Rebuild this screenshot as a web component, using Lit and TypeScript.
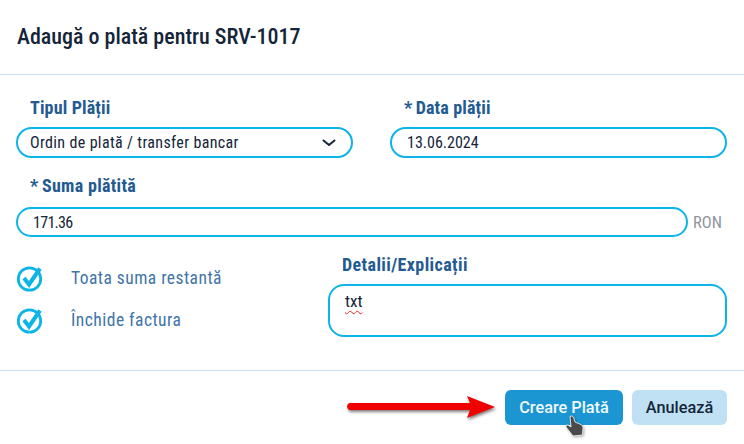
import { LitElement, html, css, svg } from "lit";
import { customElement } from "lit/decorators.js";

const check = svg`<svg class="chk" width="28" height="28" viewBox="0 0 28 28" fill="none">
  <circle cx="13.5" cy="15" r="11.2" stroke="#0db4e6" stroke-width="2.8"/>
  <path d="M8 14 L13 20.5 L24 4.5" stroke="#0db4e6" stroke-width="4" stroke-linecap="butt" stroke-linejoin="miter"/>
</svg>`;

@customElement("app-root")
export class AppRoot extends LitElement {
  static styles = css`
    :host { display: block; width: 744px; height: 444px; background: #fff; overflow: hidden; position: relative;
      font-family: "Roboto", "Liberation Sans", sans-serif; color: #1a2a3a; font-stretch: 80%; }
    * { box-sizing: border-box; }
    .head { height: 75px; border-bottom: 1px solid #c4e4f5; padding: 24px 17px 0; font-size: 22px; font-weight: 500; line-height: 26px; color: #14253a; font-stretch: 75%; }
    .body { height: 296px; border-bottom: 1px solid #c4e4f5; padding: 23px 17px 0 16px; display: flex; flex-direction: column; }
    .row { display: grid; grid-template-columns: 337px 337px; column-gap: 37px; }
    .lab { font-size: 18px; font-weight: 700; color: #235a91; line-height: 20px; padding-left: 14px; margin-bottom: 9px; display: block; font-stretch: 75%; letter-spacing: 0.15px; }
    .lab b { font-weight: 700; margin-right: -1px; }
    .sumlab { margin-bottom: 11px; letter-spacing: 0.3px; }
    .wide { letter-spacing: 0.4px; }
    .inp { height: 31px; border: 2.5px solid #0cb4ea; border-radius: 16px; padding: 0 14px; display: flex; align-items: center; justify-content: space-between; font-size: 16px; color: #14253a; background: #fff; }
    .sel { padding: 0 15px 0 12px; letter-spacing: 0.35px; }
    .date { padding-left: 15px; }
    .sum { margin-top: 18px; }
    .sumrow { display: flex; align-items: center; gap: 5px; }
    .sumrow .inp { width: 672px; height: 30px; padding-left: 15px; letter-spacing: -0.7px; }
    .ron { color: #8f959c; font-size: 16.5px; }
    .lower { display: grid; grid-template-columns: 312px 399px; margin-top: 18px; }
    .checks { display: flex; flex-direction: column; gap: 14px; padding-top: 9px; }
    .ck { display: flex; align-items: center; height: 28px; color: #3f74ab; font-size: 17.5px; gap: 27px; letter-spacing: 0.47px; }
    .ta { height: 53px; border: 2.5px solid #0cb4ea; border-radius: 16px; padding: 5px 15px; font-size: 17px; color: #14253a; }
    .ta span { text-decoration: underline wavy #f02828 1.3px; text-underline-offset: 3px; }
    .foot { display: flex; justify-content: flex-end; align-items: flex-start; gap: 9px; padding: 19px 17px 0 0; position: relative; }
    .btn { height: 35px; border-radius: 6px; display: flex; align-items: center; justify-content: center; font-size: 16.3px; font-weight: 500; font-stretch: 100%; }
    .pri { width: 118px; background: #1b96d2; color: #f2fafe; }
    .sec { width: 95px; background: #bfe1f3; color: #14253a; }
    .arrow { position: absolute; left: 344px; top: 19px; filter: drop-shadow(1px 2px 1.5px rgba(0,0,0,.5)); }
    .hand { position: absolute; left: 565px; top: 44px; filter: drop-shadow(1px 1px 1px rgba(0,0,0,.35)); }
  `;
  render() {
    return html`
      <div class="head">Adaugă o plată pentru SRV-1017</div>
      <div class="body">
        <div class="row">
          <div>
            <label class="lab">Tipul Plății</label>
            <div class="inp sel"><span>Ordin de plată / transfer bancar</span>
              <svg width="14" height="8" viewBox="0 0 14 8" fill="none"><path d="M1.5 1.5 L7 6 L12.5 1.5" stroke="#14253a" stroke-width="2" stroke-linecap="round" stroke-linejoin="round"/></svg>
            </div>
          </div>
          <div>
            <label class="lab"><b>*</b> Data plății</label>
            <div class="inp date">13.06.2024</div>
          </div>
        </div>
        <div class="sum">
          <label class="lab sumlab"><b>*</b> Suma plătită</label>
          <div class="sumrow"><div class="inp">171.36</div><span class="ron">RON</span></div>
        </div>
        <div class="lower">
          <div class="checks">
            <div class="ck">${check}<span>Toata suma restantă</span></div>
            <div class="ck">${check}<span>Închide factura</span></div>
          </div>
          <div>
            <label class="lab wide">Detalii/Explicații</label>
            <div class="ta"><span>txt</span></div>
          </div>
        </div>
      </div>
      <div class="foot">
        <svg class="arrow" width="160" height="34" viewBox="0 0 160 34" fill="none">
          <path d="M5 13 H126 L123 6 L151 17 L123 28 L126 20 H5 Q1 16.5 5 13Z" fill="#f00000"/>
        </svg>
        <div class="btn pri">Creare Plată</div>
        <div class="btn sec">Anulează</div>
        <svg class="hand" width="20" height="23" viewBox="0 0 20 23">
          <path d="M5 1.5 Q7 0 8.5 2 L10 7 L16 9.5 Q18 10.5 18 12.5 L17.5 20 L8 21 L1 12 Q0 9.5 3 10 L6 12 Z" fill="#4a4a4a" stroke="#fff" stroke-width=".8"/>
        </svg>
      </div>
    `;
  }
}
